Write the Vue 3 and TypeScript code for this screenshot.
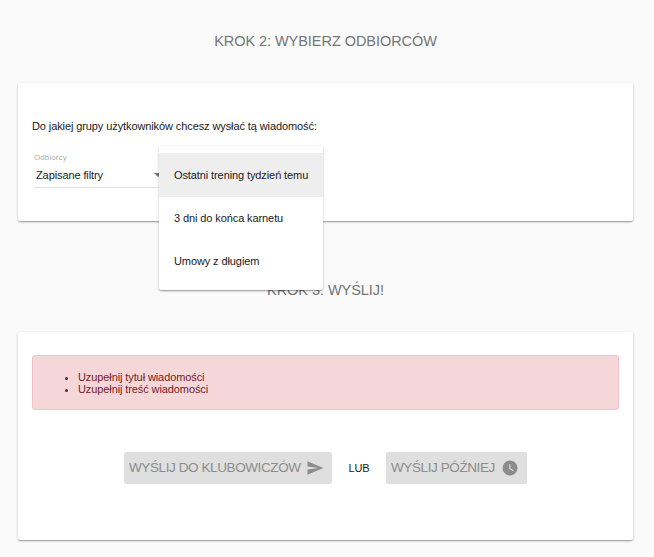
<script setup lang="ts">
import { ref } from 'vue'

const filters: string[] = [
  'Ostatni trening tydzień temu',
  '3 dni do końca karnetu',
  'Umowy z długiem',
]
const active = ref<number>(0)
const errors: string[] = ['Uzupełnij tytuł wiadomości', 'Uzupełnij treść wiadomości']
</script>

<template>
  <main class="page">
    <h2 class="step-title">KROK 2: WYBIERZ ODBIORCÓW</h2>
    <section class="card recipients">
      <p class="question">Do jakiej grupy użytkowników chcesz wysłać tą wiadomość:</p>
      <div class="field">
        <label class="label">Odbiorcy</label>
        <div class="select">
          <span>Zapisane filtry</span>
          <i class="caret"></i>
        </div>
        <ul class="menu">
          <li
            v-for="(filter, i) in filters"
            :key="filter"
            class="option"
            :class="{ active: i === active }"
            @click="active = i"
          >
            {{ filter }}
          </li>
        </ul>
      </div>
    </section>

    <h2 class="step-title second">KROK 3: WYŚLIJ!</h2>
    <section class="card send">
      <ul class="alert">
        <li v-for="error in errors" :key="error">{{ error }}</li>
      </ul>
      <div class="actions">
        <button class="btn btn-now" disabled>
          <span>WYŚLIJ DO KLUBOWICZÓW</span>
          <svg class="icon" viewBox="0 0 24 24"><path d="M2 21l21-9L2 3v7l15 2-15 2z" /></svg>
        </button>
        <span class="or">LUB</span>
        <button class="btn btn-later" disabled>
          <span>WYŚLIJ PÓŹNIEJ</span>
          <svg class="icon" viewBox="0 0 24 24">
            <path
              fill-rule="evenodd"
              d="M12 2a10 10 0 1 0 0 20a10 10 0 0 0 0-20zM16.2 16.2L11 13V7h1.5v5.2l4.5 2.7z"
            />
          </svg>
        </button>
      </div>
    </section>
  </main>
</template>

<style>
body {
  background: #fafafa;
}
</style>

<style scoped>
.page {
  box-sizing: border-box;
  height: 557px;
  padding: 31px 21px 0 18px;
  overflow: hidden;
  background: #fafafa;
  color: #1a1a1a;
  font-family: 'Liberation Sans', Arial, sans-serif;
  font-size: 11px;
  letter-spacing: -0.1px;
}
.step-title {
  margin: 0 0 32px;
  height: 20px;
  line-height: 20px;
  font-size: 14.5px;
  font-weight: 400;
  letter-spacing: -0.05px;
  text-align: center;
  color: #757575;
}
.step-title.second {
  margin-top: 59px;
}
.card {
  box-sizing: border-box;
  background: #fff;
  border-radius: 2px;
  box-shadow: 0 1px 3px rgba(0, 0, 0, 0.2), 0 1px 1px rgba(0, 0, 0, 0.14),
    0 2px 1px -1px rgba(0, 0, 0, 0.12);
}
.recipients {
  height: 138px;
  padding: 36px 14px 0;
}
.question {
  margin: 0;
  line-height: 14px;
}
.field {
  position: relative;
  width: 130px;
  margin: 19px 0 0 2px;
}
.label {
  display: block;
  height: 10px;
  line-height: 12px;
  font-size: 8px;
  letter-spacing: 0.1px;
  color: rgba(0, 0, 0, 0.38);
}
.select {
  display: flex;
  align-items: center;
  justify-content: space-between;
  height: 25px;
  padding: 0 2px 0 2px;
  border-bottom: 1px solid #e0e0e0;
}
.caret {
  border: 4px solid transparent;
  border-top-color: #757575;
  border-bottom: 0;
}
.menu {
  position: absolute;
  z-index: 2;
  top: -6px;
  left: 125px;
  box-sizing: border-box;
  width: 164px;
  height: 144px;
  margin: 0;
  padding: 7px 0;
  list-style: none;
  background: #fff;
  border-radius: 2px;
  box-shadow: 0 1px 3px rgba(0, 0, 0, 0.2), 0 1px 1px rgba(0, 0, 0, 0.14),
    0 2px 1px -1px rgba(0, 0, 0, 0.12);
}
.option {
  height: 43px;
  padding-left: 15px;
  line-height: 43px;
  white-space: nowrap;
}
.option.active {
  height: 44px;
  line-height: 44px;
  background: #eee;
}
.send {
  height: 208px;
  padding: 23px 14px 0;
}
.alert {
  box-sizing: border-box;
  height: 55px;
  margin: 0;
  padding: 15px 0 0 45px;
  line-height: 12px;
  color: #721c24;
  background: #f5d7da;
  border: 1px solid #f1c2c8;
  border-radius: 3px;
}
.actions {
  display: flex;
  align-items: center;
  margin: 42px 0 0 92px;
}
.btn {
  box-sizing: border-box;
  display: flex;
  align-items: center;
  justify-content: space-between;
  height: 32px;
  padding: 0 8px 0 5px;
  border: 0;
  border-radius: 2px;
  background: #dfdfdf;
  color: #8c8c8c;
  font-family: inherit;
  font-size: 13.5px;
  letter-spacing: -0.4px;
  line-height: 16px;
  white-space: nowrap;
}
.btn span {
  padding-bottom: 1px;
}
.btn-now {
  width: 208px;
}
.btn-later {
  width: 141px;
}
.or {
  width: 54px;
  text-align: center;
}
.icon {
  width: 18px;
  height: 18px;
  fill: #8c8c8c;
}
</style>
